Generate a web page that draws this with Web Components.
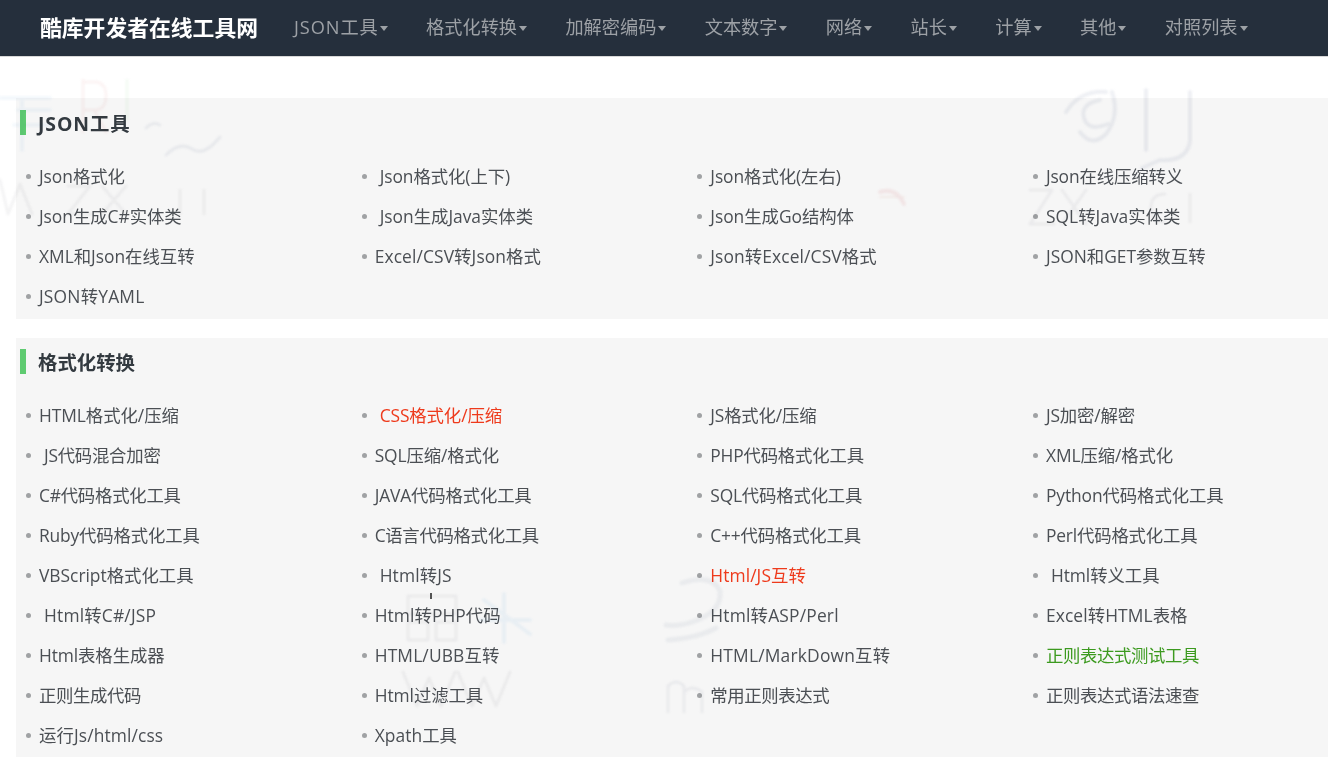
<!DOCTYPE html>
<html lang="zh-CN"><head><meta charset="utf-8"><title>酷库开发者在线工具网</title>
<style>
html,body{margin:0;padding:0;background:#fff}
body{width:1328px;height:770px;overflow:hidden;position:relative;font-family:"Open Sans","Noto Sans CJK SC",sans-serif}
</style></head><body>
<template id="t-header"><style>
:host{display:flex;align-items:center;height:55px;padding:0 0 1px 40px;background:#252f3c;border-bottom:1px solid #d8d8d8;color:#9da1a6}
.logo{font:700 21.8px/54px "Open Sans","Noto Sans CJK SC",sans-serif;color:#fff;margin-right:36px;white-space:nowrap}
nav{display:flex;gap:38.35px;margin-bottom:1px}
</style><div class="logo"><slot name="logo"></slot></div><nav><slot></slot></nav></template>
<template id="t-nav"><style>
:host{display:inline-flex;align-items:center;font-size:18.2px;line-height:54px;white-space:nowrap}
:host([wide]){letter-spacing:.95px}
i{width:0;height:0;border-left:4.5px solid transparent;border-right:4.5px solid transparent;border-top:5px solid #9da1a6;margin:2px 0 0 2px}
:host([wide]) i{margin-left:1px}
</style><slot></slot><i></i></template>
<template id="t-main"><style>
:host{display:block;padding:41px 0 0 16px}
.w{display:flex;flex-direction:column;gap:19px}
</style><div class="w"><slot></slot></div></template>
<template id="t-section"><style>
:host{display:block;background:#f6f6f6;padding-top:12px}
:host([long]){padding-top:11px}
h2{margin:0 0 0 4px;height:25px;font:700 19.4px/27px "Open Sans","Noto Sans CJK SC",sans-serif;color:#333a40;padding-left:12px;border-left:6px solid #5fcb71}
:host([wide]) h2{letter-spacing:.9px}
.g{display:grid;grid-template-columns:repeat(4,335.67px);grid-auto-rows:40px;padding:21px 0 3px 8px}
:host([long]) .g{padding-bottom:2px}
</style><h2><slot name="title"></slot></h2><div class="g"><slot></slot></div></template>
<template id="t-link"><style>
:host{display:flex;align-items:center;font-size:17.4px;line-height:40px;color:#4b4f54;white-space:nowrap}
:host::before{content:"";width:5px;height:5px;border-radius:50%;background:#a0a2a4;margin:0 8px 0 2px;flex:none}
:host([sp]) span{padding-left:5px}
:host([red]){color:#ee3a1c}
:host([green]){color:#3c9a1f}
</style><span><slot></slot></span></template>
<template id="t-mark"><style>
:host{position:absolute;left:0;top:0;width:1328px;height:770px;pointer-events:none;mix-blend-mode:multiply}
svg{display:block}
.soft{filter:blur(1.2px);opacity:.8}
</style><svg width="1328" height="770" viewBox="0 0 1328 770" fill="none" aria-hidden="true">
<g class="soft" stroke-linecap="round" stroke-linejoin="round">
<path d="M0 98h50M18 110h32M14 125h36M22 100v50" stroke="#f1f7fc" stroke-width="4"/>
<path d="M83 80v52M83 82h14q9 2 9 14t-9 14h-14M94 110l12 22" stroke="#fbf1f1" stroke-width="3"/>
<path d="M127 80v40" stroke="#f2f9f2" stroke-width="3"/>
<path d="M146 128q7-7 14-3M166 155q14-14 26-6t28-12" stroke="#eceef2" stroke-width="3"/>
<path d="M0 180l8 34 12-30 12 30M68 186h22l-22 28h24M102 186l24 28M126 186l-24 28M180 190v24M204 190v24" stroke="#f1f1f2" stroke-width="3"/>
<path d="M1066 112q14-22 40-20M1100 100q-20 4-16 18t24 6M1112 92q8 24-6 42q-14 14-26-2M1146 90v60M1190 92v50q-4 20-30 18l-18 8" stroke="#ebedf2" stroke-width="4"/>
<path d="M1030 190h22l-22 34h24M1062 190l24 34M1086 190l-24 34M1165 194q-14 0-14 14t14 14M1190 194v28" stroke="#f0f0f2" stroke-width="3"/>
<path d="M880 197h24" stroke="#f8eae6" stroke-width="1.4"/>
<path d="M880 192q16-5 24 12" stroke="#f9e9ea" stroke-width="4"/>
<path d="M682 583q30-10 38 8q2 18-20 28q-18 8-34 6M668 640q30-2 48-12" stroke="#eff1f4" stroke-width="5"/>
<path d="M484 600l46 34M504 594v48M480 620h50" stroke="#eef6fc" stroke-width="4"/>
<path d="M408 596h48v18h-48zM408 622h20v18h-20zM436 622h20v18h-20z" stroke="#f0f0f2" stroke-width="3"/>
<path d="M403 672l14 34 12-28 12 28 14-34M458 672l14 34 12-28 12 28 14-34" stroke="#f0f0f1" stroke-width="3"/>
<path d="M668 712v-26q8-8 16 0v26M684 692q8-8 18 0v20" stroke="#eff0f3" stroke-width="3"/>
</g>
<path d="M431 593v6" stroke="#555" stroke-width="2"/>
</svg></template>
<site-header><span slot="logo">酷库开发者在线工具网</span>
<nav-item wide>JSON工具</nav-item><nav-item>格式化转换</nav-item><nav-item>加解密编码</nav-item><nav-item>文本数字</nav-item><nav-item>网络</nav-item><nav-item>站长</nav-item><nav-item>计算</nav-item><nav-item>其他</nav-item><nav-item>对照列表</nav-item></site-header>
<site-main>
<tool-section wide><span slot="title">JSON工具</span>
<tool-link>Json格式化</tool-link><tool-link sp>Json格式化(上下)</tool-link><tool-link>Json格式化(左右)</tool-link><tool-link>Json在线压缩转义</tool-link>
<tool-link>Json生成C#实体类</tool-link><tool-link sp>Json生成Java实体类</tool-link><tool-link>Json生成Go结构体</tool-link><tool-link>SQL转Java实体类</tool-link>
<tool-link>XML和Json在线互转</tool-link><tool-link>Excel/CSV转Json格式</tool-link><tool-link>Json转Excel/CSV格式</tool-link><tool-link>JSON和GET参数互转</tool-link>
<tool-link>JSON转YAML</tool-link></tool-section>
<tool-section long><span slot="title">格式化转换</span>
<tool-link>HTML格式化/压缩</tool-link><tool-link sp red>CSS格式化/压缩</tool-link><tool-link>JS格式化/压缩</tool-link><tool-link>JS加密/解密</tool-link>
<tool-link sp>JS代码混合加密</tool-link><tool-link>SQL压缩/格式化</tool-link><tool-link>PHP代码格式化工具</tool-link><tool-link>XML压缩/格式化</tool-link>
<tool-link>C#代码格式化工具</tool-link><tool-link>JAVA代码格式化工具</tool-link><tool-link>SQL代码格式化工具</tool-link><tool-link>Python代码格式化工具</tool-link>
<tool-link>Ruby代码格式化工具</tool-link><tool-link>C语言代码格式化工具</tool-link><tool-link>C++代码格式化工具</tool-link><tool-link>Perl代码格式化工具</tool-link>
<tool-link>VBScript格式化工具</tool-link><tool-link sp>Html转JS</tool-link><tool-link red>Html/JS互转</tool-link><tool-link sp>Html转义工具</tool-link>
<tool-link sp>Html转C#/JSP</tool-link><tool-link>Html转PHP代码</tool-link><tool-link>Html转ASP/Perl</tool-link><tool-link>Excel转HTML表格</tool-link>
<tool-link>Html表格生成器</tool-link><tool-link>HTML/UBB互转</tool-link><tool-link>HTML/MarkDown互转</tool-link><tool-link green>正则表达式测试工具</tool-link>
<tool-link>正则生成代码</tool-link><tool-link>Html过滤工具</tool-link><tool-link>常用正则表达式</tool-link><tool-link>正则表达式语法速查</tool-link>
<tool-link>运行Js/html/css</tool-link><tool-link>Xpath工具</tool-link></tool-section>
</site-main>
<page-mark></page-mark>
<script>
function def(n,t,C){customElements.define(n,class extends (C||HTMLElement){constructor(){super();this.attachShadow({mode:"open"}).appendChild(document.getElementById(t).content.cloneNode(true))}})}
/* The reference's Latin runs at 18px against CJK at 17px: one size per link, with tracking that makes up the width. */
class ToolLink extends HTMLElement{
  connectedCallback(){
    const F=17.4,s=this.shadowRoot.querySelector("span"),t=this.textContent;
    const pad=this.hasAttribute("sp")?5:0,w=s.getBoundingClientRect().width-pad;
    const c=(t.match(/[\u4e00-\u9fff]/g)||[]).length,latin=w-c*F;
    this.style.letterSpacing=((latin*17.85/F+17*c-w)/t.length).toFixed(3)+"px";
  }
}
def("site-header","t-header");def("nav-item","t-nav");def("site-main","t-main");def("tool-section","t-section");def("tool-link","t-link",ToolLink);def("page-mark","t-mark");
</script></body></html>
